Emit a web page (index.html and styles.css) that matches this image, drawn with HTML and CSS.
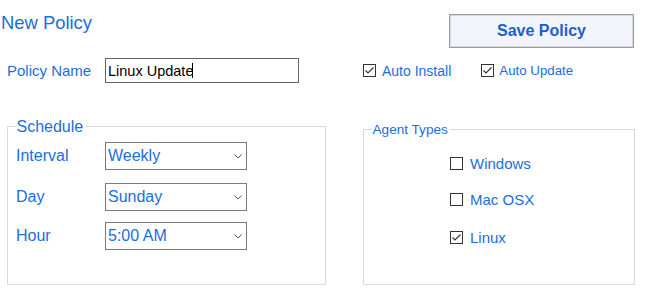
FILE: index.html
```html
<!DOCTYPE html>
<html>
<head>
<link rel="stylesheet" href="styles.css">
</head>
<body>
<div class="page">
  <div class="header">
    <h1 class="title">New Policy</h1>
    <button class="save-btn">Save Policy</button>
  </div>

  <div class="name-row">
    <label class="name-label">Policy Name</label>
    <div class="textbox">Linux Update<span class="caret"></span></div>
    <label class="check opt-install">
      <span class="box"><svg width="11" height="11" viewBox="0 0 11 11"><path d="M1.5 5.5 L4 8 L9.5 2.5" fill="none" stroke="#333" stroke-width="1.2"/></svg></span>
      Auto Install
    </label>
    <label class="check opt-update">
      <span class="box"><svg width="11" height="11" viewBox="0 0 11 11"><path d="M1.5 5.5 L4 8 L9.5 2.5" fill="none" stroke="#333" stroke-width="1.2"/></svg></span>
      Auto Update
    </label>
  </div>

  <div class="groups">
    <fieldset class="group schedule">
      <legend>Schedule</legend>
      <div class="field">
        <span class="field-label">Interval</span>
        <div class="select"><span>Weekly</span><svg width="8" height="5" viewBox="0 0 8 5"><path d="M0.5 0.5 L4 4 L7.5 0.5" fill="none" stroke="#555" stroke-width="1"/></svg></div>
      </div>
      <div class="field day">
        <span class="field-label">Day</span>
        <div class="select"><span>Sunday</span><svg width="8" height="5" viewBox="0 0 8 5"><path d="M0.5 0.5 L4 4 L7.5 0.5" fill="none" stroke="#555" stroke-width="1"/></svg></div>
      </div>
      <div class="field hour">
        <span class="field-label">Hour</span>
        <div class="select"><span>5:00 AM</span><svg width="8" height="5" viewBox="0 0 8 5"><path d="M0.5 0.5 L4 4 L7.5 0.5" fill="none" stroke="#555" stroke-width="1"/></svg></div>
      </div>
    </fieldset>

    <fieldset class="group agents">
      <legend>Agent Types</legend>
      <div class="agent-list">
        <label class="check"><span class="box"></span>Windows</label>
        <label class="check"><span class="box"></span>Mac OSX</label>
        <label class="check linux">
          <span class="box"><svg width="11" height="11" viewBox="0 0 11 11"><path d="M1.5 5.5 L4 8 L9.5 2.5" fill="none" stroke="#333" stroke-width="1.2"/></svg></span>
          Linux
        </label>
      </div>
    </fieldset>
  </div>
</div>
</body>
</html>
```

FILE: styles.css
```css
body {
  margin: 0;
  background-color: #ffffff;
  font-family: "Liberation Sans", Arial, sans-serif;
  color: #1a6ee0;
}

/* top line: title and save button */
.header {
  display: flex;
  justify-content: space-between;
  align-items: flex-start;
  padding: 12px 12px 0 1px;
}
.title {
  margin: 0;
  font-size: 18.4px;
  font-weight: normal;
  line-height: 22px;
}
.save-btn {
  margin-top: 2px;
  width: 185px;
  height: 34px;
  padding: 0;
  border: 1px solid #9d9d9d;
  box-shadow: inset 0 0 0 1px #d4d8de;
  background-color: #f2f6fc;
  color: #1c5fcc;
  font-family: "Liberation Sans", Arial, sans-serif;
  font-size: 16px;
  font-weight: bold;
}

/* policy name line */
.name-row {
  display: flex;
  align-items: center;
  height: 25px;
  margin-top: 10px;
}
.name-label {
  width: 105px;
  padding-left: 7px;
  box-sizing: border-box;
  font-size: 15px;
}
.textbox {
  display: flex;
  align-items: center;
  width: 194px;
  height: 25px;
  box-sizing: border-box;
  border: 1px solid #646464;
  padding-left: 2px;
  font-size: 14.5px;
  color: #000000;
}
.caret {
  width: 1px;
  height: 15px;
  margin-left: -1px;
  background-color: #000000;
}

.check {
  display: flex;
  align-items: center;
  gap: 6px;
}
.box {
  flex: none;
  width: 13px;
  height: 13px;
  box-sizing: border-box;
  border: 1px solid #333333;
  background-color: #ffffff;
}
.box svg {
  display: block;
}
.opt-install {
  margin-left: 64px;
  font-size: 14px;
}
.opt-update {
  margin-left: 30px;
  gap: 5px;
  font-size: 13.3px;
}

/* group boxes */
.groups {
  display: flex;
  align-items: flex-start;
  margin-top: 35px;
}
.group {
  margin: 0;
  box-sizing: border-box;
  border: 1px solid #dadada;
}
.schedule {
  margin-left: 7px;
  width: 319px;
  height: 167px;
  padding: 7px 0 0 8px;
}
.schedule legend {
  font-size: 16px;
  line-height: 17px;
  padding: 0 3px 0 0.5px;
}
.field {
  display: flex;
  align-items: center;
  font-size: 16px;
}
.field-label {
  width: 89px;
}
.select {
  display: flex;
  align-items: center;
  justify-content: space-between;
  width: 142px;
  height: 28px;
  box-sizing: border-box;
  border: 1px solid #7a7a7a;
  padding: 0 4px 0 2px;
}
.select svg {
  display: block;
}
.day {
  margin-top: 13px;
}
.hour {
  margin-top: 11px;
}

.agents {
  margin-left: 37px;
  margin-top: 4px;
  width: 272px;
  height: 163px;
  padding: 16px 0 0 8px;
  font-size: 15px;
}
.agents legend {
  font-size: 13.6px;
  line-height: 15px;
  padding: 0 2px 0 0.5px;
}
.agent-list {
  display: flex;
  flex-direction: column;
  gap: 16px;
  padding-left: 78px;
}
.agent-list .check {
  height: 20px;
  gap: 7px;
}
.agent-list .linux {
  margin-top: 2px;
}
```
